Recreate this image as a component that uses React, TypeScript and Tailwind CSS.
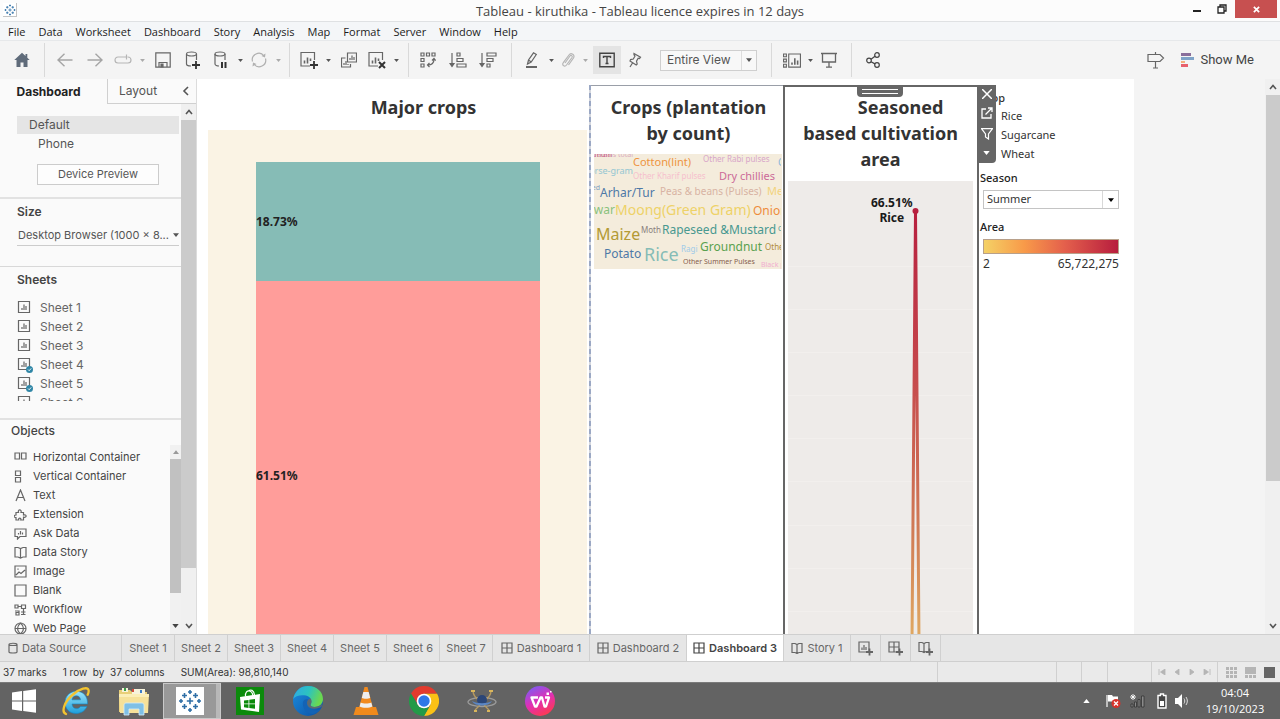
import React from "react";

type Kids = { children?: React.ReactNode };

const ui = "font-['Inter','Liberation_Sans',sans-serif]";
const seg = "font-['Open_Sans','Noto_Sans',sans-serif]";
const viz = "font-['Noto_Sans','Open_Sans',sans-serif]";

function Ico({ className = "w-4 h-4", box = "0 0 16 16", children }: Kids & { className?: string; box?: string }) {
  return (
    <svg className={`shrink-0 ${className}`} viewBox={box} fill="none" stroke="currentColor" strokeWidth="1.2" aria-hidden="true">
      {children}
    </svg>
  );
}

function Caret({ className = "w-[5px] h-[3px]" }: { className?: string }) {
  return (
    <svg className={`shrink-0 ${className}`} viewBox="0 0 8 5" fill="currentColor" aria-hidden="true">
      <path d="M0 0h8L4 5z" />
    </svg>
  );
}

function Tool({ label, className = "w-[30px]", children }: Kids & { label: string; className?: string }) {
  return (
    <button type="button" aria-label={label} title={label} className={`flex h-7 shrink-0 items-center justify-center ${className}`}>
      {children}
    </button>
  );
}

function Drop({ label, dim = false }: { label: string; dim?: boolean }) {
  return (
    <button type="button" aria-label={label} className={`flex h-7 w-3 shrink-0 items-center justify-center ${dim ? "text-[#aaaaaa]" : "text-[#555555]"}`}>
      <Caret />
    </button>
  );
}

function Group({ className = "", children }: Kids & { className?: string }) {
  return <div className={`flex h-[34px] shrink-0 items-center border-r border-[#d9d9d9] ${className}`}>{children}</div>;
}

/* ---------- title and menu ---------- */

const LOGO_MARKS: [number, number, number][] = [
  [12, 12, 3.2], [12, 3, 2], [12, 21, 2], [3, 12, 2], [21, 12, 2], [6.5, 6.5, 2.5], [17.5, 6.5, 2.5], [6.5, 17.5, 2.5], [17.5, 17.5, 2.5],
];

function TableauMark({ className }: { className: string }) {
  return (
    <svg className={className} viewBox="0 0 24 24" stroke="#2f6fa6" strokeWidth="1.6" aria-hidden="true">
      {LOGO_MARKS.map(([x, y, r]) => (
        <path key={`${x}-${y}`} d={`M${x - r} ${y}h${r * 2}M${x} ${y - r}v${r * 2}`} />
      ))}
    </svg>
  );
}

function TitleBar() {
  return (
    <header className="flex h-[22px] shrink-0 items-start border-b border-[#dfe1e3] bg-[#fcfcfc]">
      <div className="flex w-36 items-center pt-[3px] pl-[3px]">
        <span className="flex h-3.5 w-3.5 items-center justify-center border-r border-b border-[#c4c4c4] bg-white">
          <TableauMark className="h-3 w-3" />
        </span>
      </div>
      <h1 className={`grow text-center text-[13px] leading-[23px] text-[#444444] ${seg}`}>Tableau - kiruthika - Tableau licence expires in 12 days</h1>
      <div className="flex w-36 justify-end pr-[3px]">
        <button type="button" aria-label="Minimise" className="flex h-[18px] w-6 items-center justify-center">
          <span className="mt-1 h-0.5 w-2 bg-[#222222]" />
        </button>
        <button type="button" aria-label="Restore" className="flex h-[18px] w-[26px] items-center justify-center text-[#222222]">
          <Ico className="h-2.5 w-2.5" box="0 0 10 10">
            <path d="M1 3h6v6H1zM3 3V1h6v6H7" strokeWidth="1.3" />
          </Ico>
        </button>
        <button type="button" aria-label="Close" className="flex h-[18px] w-[42px] items-center justify-center bg-[#c75050] text-white">
          <Ico className="h-[7px] w-[7px]" box="0 0 8 8">
            <path d="M1 1l6 6M7 1l-6 6" strokeWidth="2" />
          </Ico>
        </button>
      </div>
    </header>
  );
}

const MENUS = ["File", "Data", "Worksheet", "Dashboard", "Story", "Analysis", "Map", "Format", "Server", "Window", "Help"];

function MenuBar() {
  return (
    <nav className={`flex h-[19px] shrink-0 items-center gap-[13px] border-b border-[#e6e8ea] bg-[#f4f6f8] pt-0.5 pl-2 text-[11px] text-[#1c1c1c] ${seg}`}>
      {MENUS.map((m) => (
        <button type="button" key={m}>{m}</button>
      ))}
    </nav>
  );
}

/* ---------- toolbar ---------- */

function Toolbar() {
  return (
    <div className="flex h-[38px] shrink-0 items-center bg-[#f4f4f4] text-[#666666]">
      <Group className="w-[45px] justify-center">
        <Tool label="Home">
          <svg className="h-4 w-4" viewBox="0 0 16 16" fill="#5f6b7a" aria-hidden="true">
            <path d="M8 .8L.3 8h2.2v7h4v-4.6h3V15h4V8h2.2l-2.4-2.2V2h-1.8v2.1z" />
          </svg>
        </Tool>
      </Group>
      <Group className="px-[5px]">
        <Tool label="Undo"><Ico className="h-4 w-4 text-[#a5a5a5]"><path d="M15.5 8H1M7.5 1.8L1 8l6.500 6.200" strokeWidth="1.400" /></Ico></Tool>
        <Tool label="Redo"><Ico className="h-4 w-4 text-[#a5a5a5]"><path d="M.5 8H15M8.500 1.800L15 8l-6.500 6.200" strokeWidth="1.400" /></Ico></Tool>
        <Tool label="Replay" className="w-[26px]">
          <Ico className="h-4 w-[18px] text-[#b5b5b5]" box="0 0 18 16"><path d="M12 5H4a3 3 0 000 6h10a3 3 0 000-6h-.5M12.500 2.500v5" /></Ico>
        </Tool>
        <Drop label="Replay options" dim />
        <Tool label="Save">
          <Ico><path d="M.8.8h14.400v14.400H.800zM4 15v-4.500h8V15" /><path d="M6 12h2v3H6z" fill="currentColor" /></Ico>
        </Tool>
        <Tool label="New data source">
          <Ico className="h-[18px] w-4" box="0 0 16 18"><ellipse cx="6.500" cy="3" rx="5" ry="2" /><path d="M1.500 3v10c0 1 2 2 4.500 2M11.500 3v6" /><path d="M11 10v8M7 14h8" stroke="#333" strokeWidth="1.800" /></Ico>
        </Tool>
        <Tool label="Pause auto updates" className="w-[26px]">
          <Ico className="h-[18px] w-4" box="0 0 16 18"><ellipse cx="7" cy="3" rx="5" ry="2" /><path d="M2 3v10c0 1 2 2 4 2M12 3v6" /><path d="M9 11v6M12.500 11v6" stroke="#333" strokeWidth="2" /></Ico>
        </Tool>
        <Drop label="Pause options" />
        <Tool label="Refresh" className="w-[26px]">
          <Ico className="h-4 w-4 text-[#b0b0b0]"><path d="M1.500 9.500A6.500 6.500 0 0113 4M14.500 6.500A6.500 6.500 0 013 12" /><path d="M14.500 1.500l-.5 4-3.500-1.500zM1.500 14.500l.5-4 3.500 1.500z" fill="currentColor" stroke="none" /></Ico>
        </Tool>
        <Drop label="Refresh options" dim />
      </Group>
      <Group className="px-1.5">
        <Tool label="New worksheet" className="w-[26px]">
          <Ico className="h-[18px] w-[18px]" box="0 0 18 18"><path d="M10 15H1V1.500h13.500V9" /><path d="M4.500 12.500v-3M7.500 12.500v-6M10.500 10V7.500" strokeWidth="1.600" /><path d="M14 10v8M10 14h8" stroke="#333" strokeWidth="1.800" /></Ico>
        </Tool>
        <Drop label="New worksheet options" />
        <Tool label="Duplicate">
          <Ico><path d="M6.500 1h9v9h-9zM4.500 6H.500v9h9v-3" /><path d="M9 8V6M11 8V3.500M13 8V5M3 13v-2M5 13V9M7 13v-1" /></Ico>
        </Tool>
        <Tool label="Clear sheet" className="w-[26px]">
          <Ico className="h-[18px] w-[18px]" box="0 0 18 18"><path d="M10 15H1V1.500h13.500V9" /><path d="M4.500 12.500v-3M7.500 12.500v-6M10.500 10V7.500" strokeWidth="1.600" /><path d="M11 11l6 6M17 11l-6 6" stroke="#333" strokeWidth="2" /></Ico>
        </Tool>
        <Drop label="Clear options" />
      </Group>
      <Group className="pr-2 pl-1">
        <Tool label="Swap rows and columns">
          <Ico><path d="M1 1h3v3H1zM6.500 1h3v3h-3zM12 1h3v3h-3zM1 6.500h3v3H1zM1 12h3v3H1z" /><path d="M14 7c0 4-2 6-6 6M12 8.500L14 6.500l1.700 2M9.500 11L7.500 13l2 2" /></Ico>
        </Tool>
        <Tool label="Sort ascending">
          <Ico className="h-4 w-[18px]" box="0 0 18 16"><path d="M3 1v13" /><path d="M1 11.500h4L3 14.500z" fill="currentColor" /><path d="M8 1h3v3H8zM8 6.500h6v3H8zM8 12h9v3H8z" /></Ico>
        </Tool>
        <Tool label="Sort descending">
          <Ico className="h-4 w-[18px]" box="0 0 18 16"><path d="M3 1v13" /><path d="M1 11.500h4L3 14.500z" fill="currentColor" /><path d="M8 1h9v3H8zM8 6.500h6v3H8zM8 12h3v3H8z" /></Ico>
        </Tool>
      </Group>
      <Group className="pr-3.5 pl-[7px]">
        <Tool label="Highlight" className="w-[26px]">
          <Ico><path d="M3.500 12l1-4L9.500.800l2.800 1.700L7.200 10z M4.500 8l2.700 2" /><path d="M2 15h11" strokeWidth="2" /></Ico>
        </Tool>
        <Drop label="Highlight options" />
        <Tool label="Group members" className="w-[22px]">
          <Ico className="h-4 w-4 text-[#b5b5b5]"><path d="M5 11l5-7c1-1.500 3 0 2 1.500L6.500 13C4.500 15.500 1.500 13 3.300 10.700L9 3c2-2.800 6.500 0 4.500 3L8.500 13" /></Ico>
        </Tool>
        <Drop label="Group options" dim />
        <Tool label="Show mark labels" className="ml-0.5 w-7 bg-[#e4e4e4] text-[#444444]">
          <Ico><path d="M.8 1.300h14.400v13.400H.800z" strokeWidth="1.400" /><path d="M4.500 6V4.500h7V6M8 4.500v7M6.500 11.500h3" strokeWidth="1.400" /></Ico>
        </Tool>
        <Tool label="Fix axes" className="w-7">
          <Ico className="h-4 w-3.5" box="0 0 14 16"><path d="M6 1.500l6.500 3.700-1 1.300-1.300-.3-1.700 3 .7 2.800-1 1L2 9l.6-1.400 2.700-.600 1.700-3L6 2.800zM4.500 11L2 15" /></Ico>
        </Tool>
        <div className={`ml-[11px] flex h-[21px] w-[97px] items-stretch border border-[#cfcfcf] bg-[#f8f8f8] text-[12px] text-[#555555] ${ui}`}>
          <select aria-label="Fit" defaultValue="Entire View" className="w-20 appearance-none bg-transparent pl-1.5 outline-none">
            <option>Entire View</option>
            <option>Standard</option>
          </select>
          <span className="pointer-events-none flex grow items-center justify-center border-l border-[#dddddd]"><Caret className="h-1 w-1.5" /></span>
        </div>
      </Group>
      <Group className="pr-[9px] pl-2">
        <Tool label="Show cards" className="w-6">
          <Ico className="h-[15px] w-5" box="0 0 20 16"><path d="M1 1h3v3H1zM1 6.500h3v3H1zM1 12h3v3H1zM6.500 1H19v14H6.500z" /><path d="M10 12.500V10M13 12.500v-7M16 12.500V8" strokeWidth="1.700" /></Ico>
        </Tool>
        <Drop label="Show cards options" />
        <Tool label="Presentation mode" className="w-[26px]">
          <Ico><path d="M0 1.500h16M1.500 1.500v8.500h13V1.500M8 10v5M5 15.200h6" strokeWidth="1.300" /></Ico>
        </Tool>
      </Group>
      <Tool label="Share" className="ml-2 w-[26px]">
        <Ico className="h-4 w-3.5 text-[#444444]" box="0 0 14 16"><circle cx="3" cy="8.500" r="2.300" /><circle cx="11" cy="3" r="2.300" /><circle cx="11" cy="13" r="2.300" /><path d="M5 7.200L9 4.300M5 9.700l4 2.200" /></Ico>
      </Tool>
      <div className="ml-auto flex items-center pr-[26px]">
        <Tool label="Guide" className="mr-4 w-[18px]">
          <Ico className="h-[18px] w-[18px]" box="0 0 18 18"><path d="M1 3.500h12l3.500 3.500L13 10.500H1zM8.500 1v2.500M8.500 10.500V17M6 17h5" /></Ico>
        </Tool>
        <button type="button" className="flex items-center gap-1.5 font-['Roboto',sans-serif] text-[13px] text-[#444444]">
          <svg className="h-3.5 w-[13px]" viewBox="0 0 13 14" aria-hidden="true">
            <path fill="#8a6f9b" d="M0 0h10v3H0z" /><path fill="#7fa3c8" d="M0 4h13v3H0z" /><path fill="#f3b07c" d="M0 8h4v2H0z" /><path fill="#e8606c" d="M0 11h7v3H0z" />
          </svg>
          Show Me
        </button>
      </div>
    </div>
  );
}

/* ---------- side pane ---------- */

function Chevron({ d, className = "h-2 w-2" }: { d: string; className?: string }) {
  return <Ico className={className} box="0 0 8 8"><path d={d} strokeWidth="1.600" /></Ico>;
}
const UP = "M1 6l3-3.500L7 6";
const DOWN = "M1 2l3 3.500L7 2";

function SheetIcon({ used }: { used: boolean }) {
  return (
    <Ico className="h-4 w-4" box="0 0 16 16">
      <path d="M1.500 1.500h11v11h-11z" /><path d="M5 10V8M7 10V4.500M9 10V6" />
      {used && <><circle cx="12.500" cy="12.500" r="3.500" fill="#2f86a6" stroke="none" /><path d="M11 12.500l1.200 1.200 2-2.300" stroke="#fff" strokeWidth=".9" /></>}
    </Ico>
  );
}

const OBJECTS: [string, React.ReactNode][] = [
  ["Horizontal Container", <path d="M1 2h4.500v6H1zM7.500 2H12v6H7.500z" />],
  ["Vertical Container", <path d="M1.500 1h5v4.500h-5zM1.500 7.500h5V12h-5z" />],
  ["Text", <path d="M2 12L6.500 1 11 12M3.500 8.500h6" />],
  ["Extension", <path d="M2 4.500h2.500C3.500 1 8 1 7 4.500h2.500V7c3.500-1 3.500 3 0 2.200V12H6.800C7.500 9.500 4 9.500 4.700 12H2V9.500C-.5 9.500-.5 7 2 7z" />],
  ["Ask Data", <path d="M1 2h11v7.500H6L3.500 12V9.500H1zM4.500 7.500V6M6.500 7.500V4M8.500 7.500V5.500" />],
  ["Data Story", <path d="M1 1.500h3l2.500 1 2.500-1h3V11H9l-2.500 1L4 11H1zM6.500 2.500V12" />],
  ["Image", <path d="M1 1h11v11H1zM2 10l3-3 2 1.500L11 5M4 3.500v1.200" />],
  ["Blank", <path d="M1 1h11v11H1z" />],
  ["Workflow", <path d="M1 2h3v3H1zM4 3.500h3.500M7.500 2h4v3.500h-4zM1 8h4v1.500M2 9.500h3V12H2zM7 9h4.500M7 11.500h4.500M9.500 5.500v6.500" />],
  ["Web Page", <><circle cx="6.500" cy="6.500" r="5.500" /><path d="M1 6.500h11M6.500 1c-4 3.500-4 7.500 0 11M6.500 1c4 3.500 4 7.500 0 11" /></>],
];

function SidePane() {
  return (
    <aside className={`flex w-[197px] shrink-0 flex-col border-r border-[#dcdcdc] bg-[#fafafa] text-[12px] text-[#555555] ${ui}`}>
      <div className="flex h-[25px] shrink-0">
        <button type="button" className="w-[107px] pr-2.5 text-center text-[12px] font-bold text-[#222222]">Dashboard</button>
        <button type="button" className="flex grow items-center justify-between border-b border-l border-[#d0d0d0] pr-1.5 pl-[11px] text-[12px]">
          Layout
          <Chevron d="M6 0L2 4l4 4" className="h-2.5 w-2" />
        </button>
      </div>
      <div className="flex min-h-0 grow">
        <div className="flex min-w-0 grow flex-col">
          <section className="h-[95px] shrink-0 border-b-2 border-[#e2e2e2] pt-3 pl-[17px]">
            <div className="mr-0.5 bg-[#e5e5e5] pl-3 leading-[18px]">Default</div>
            <div className="pl-[21px] leading-[19px]">Phone</div>
            <button type="button" className="mt-[11px] ml-5 block h-[21px] w-[122px] border border-[#cccccc] bg-[#fdfdfd] text-[11px] leading-[19px]">Device Preview</button>
          </section>
          <section className="h-[68px] shrink-0 border-b border-[#d8d8d8] pt-[3px] pl-[17px]">
            <h2 className="text-[12px] leading-5 font-semibold text-[#444444]">Size</h2>
            <button type="button" className="mt-[3px] flex h-[21px] w-[162px] items-center justify-between border-b border-[#cccccc] pl-px text-[11px]">
              Desktop Browser (1000 x 8...
              <Caret className="h-1 w-1.5" />
            </button>
          </section>
          <section className="h-[153px] shrink-0 border-b-2 border-[#e2e2e2] pt-[3px] pl-[17px]">
            <h2 className="text-[12px] leading-5 font-semibold text-[#444444]">Sheets</h2>
            <ul className="mt-2 h-[103px] overflow-hidden">
              {[1, 2, 3, 4, 5, 6].map((n) => (
                <li key={n} className="flex h-[19px] items-center gap-[7px] text-[#666666]">
                  <SheetIcon used={n === 4 || n === 5} />
                  <span>Sheet {n}</span>
                </li>
              ))}
            </ul>
          </section>
          <section className="flex min-h-0 grow flex-col overflow-hidden">
            <h2 className="shrink-0 pb-1 pl-[11px] text-[12px] leading-[21px] font-medium text-[#444444]">Objects</h2>
            <div className="flex min-h-0 grow">
              <ul className="min-h-0 grow overflow-hidden pt-[3px] pl-[14px] text-[11px] text-[#444444]">
                {OBJECTS.map(([name, icon]) => (
                  <li key={name} className="flex h-[19px] items-center gap-1.5">
                    <Ico className="h-[13px] w-[13px] text-[#666666]" box="0 0 13 13">{icon}</Ico>
                    <span className="whitespace-nowrap">{name}</span>
                  </li>
                ))}
              </ul>
              <div className="flex w-[11px] shrink-0 flex-col items-center bg-[#f1f1f1] text-[#999999]">
                <span className="flex h-3.5 rotate-180 items-center"><Caret className="h-1 w-1.5" /></span>
                <div className="h-[134px] w-full bg-[#c1c1c1]" />
                <span className="mt-auto flex h-4 items-center text-[#444444]"><Caret className="h-1 w-[7px]" /></span>
              </div>
            </div>
          </section>
        </div>
        <div className="flex w-[15px] shrink-0 flex-col items-center bg-[#f0f0f0] text-[#555555]">
          <span className="flex h-4 items-center"><Chevron d={UP} /></span>
          <div className="h-[448px] w-full bg-[#cbcbcb]" />
          <span className="mt-auto flex h-4 items-center"><Chevron d={DOWN} /></span>
        </div>
      </div>
    </aside>
  );
}

/* ---------- dashboard ---------- */

const heading = "text-center text-[18px] leading-[26px] font-bold text-[#333333]";

function MajorCrops() {
  return (
    <section className="flex min-w-0 grow flex-col pt-[15px] pr-0.5 pl-[11px]">
      <h2 className={`pl-[52px] ${heading}`}>Major crops</h2>
      <div className="mt-[10px] flex min-h-0 grow flex-col bg-[#faf3e4] pt-8 pr-[47px] pl-12 text-[12px] font-bold text-[#222222]">
        <div className="flex h-[119px] shrink-0 items-center bg-[#86bcb6]">18.73%</div>
        <div className="min-h-0 grow bg-[#ff9d9a] pt-[187px] leading-4">61.51%</div>
      </div>
    </section>
  );
}

type Word = [text: string, x: number, y: number, size: number, color: string, anchor?: "end"];
const WORDS: Word[] = [
  ["Cereals total", 39, 3, 7, "#d9a9bd", "end"],
  ["Sesamum", 18, 3, 7, "#c4517c", "end"],
  ["Cotton(lint)", 39, 12, 11, "#ee9440"],
  ["Other Rabi pulses", 109, 8, 8, "#d8a6c9"],
  ["Coconut", 184, 12, 10, "#8cb6da"],
  ["Horse-gram", 39, 20, 9, "#93c6d2", "end"],
  ["Other Kharif pulses", 39, 25, 8, "#f6bfcd"],
  ["Dry chillies", 125, 26, 11, "#cc6a98"],
  ["Linseed", 6, 36, 7, "#7f9fc4", "end"],
  ["Arhar/Tur", 6, 43, 12, "#4e79a7"],
  ["Peas & beans (Pulses)", 66, 41, 10, "#d8b3a3"],
  ["Mesta", 173, 41, 11, "#f2d37c"],
  ["Jowar", 21, 60, 12, "#8ac27c", "end"],
  ["Moong(Green Gram)", 21, 61, 14, "#eed268"],
  ["Onion", 159, 61, 12, "#ee8c3c"],
  ["Maize", 2, 86, 16, "#b39a35"],
  ["Moth", 47, 79, 8, "#8a7f7c"],
  ["Rapeseed &Mustard", 68, 80, 12, "#489890"],
  ["Castor", 184, 77, 7, "#499894"],
  ["Potato", 10, 104, 12, "#4e79a7"],
  ["Rice", 50, 107, 18, "#86bcb6"],
  ["Ragi", 87, 98, 8, "#a0cbe8"],
  ["Groundnut", 106, 97, 12, "#59a14f"],
  ["Other Cereals", 171, 96, 8, "#b08b3c"],
  ["Other Summer Pulses", 89, 110, 7, "#86604c"],
  ["Black pepper", 167, 113, 7, "#f1aed0"],
];

function CropCloud() {
  return (
    <section className="flex w-[194px] shrink-0 pt-[6px]">
      <div className="w-0.5 shrink-0 bg-[repeating-linear-gradient(to_bottom,#9ba8c4_0,#9ba8c4_5px,#d3d6dd_5px,#d3d6dd_8px)]" />
      <div className="min-w-0 grow border-t border-[#9a9fa8] pt-2 pl-[3px]">
        <h2 className={heading}>Crops (plantation<br />by count)</h2>
        <div className="mt-2 mr-px h-[115px] overflow-hidden bg-[#f4ecdc]">
          <svg className="h-[115px] w-[187px]" viewBox="0 0 187 115" role="img" aria-label="Crops by plantation count">
            {WORDS.map(([t, x, y, s, c, a]) => (
              <text key={t} x={x} y={y} fontSize={s} fill={c} textAnchor={a ?? "start"}>{t}</text>
            ))}
          </svg>
        </div>
      </div>
    </section>
  );
}

function SeasonArea() {
  return (
    <section className="relative flex w-[196px] shrink-0 flex-col pt-[6px]">
      <div className="flex grow flex-col border-t-2 border-r-2 border-l-2 border-[#666666] pt-[7px] pr-1 pl-[3px]">
        <h2 className={heading}><span className="pl-10">Seasoned</span><br />based cultivation area</h2>
        <div className="relative mt-[9px] min-h-0 grow overflow-hidden bg-[#eeebe9]">
          <svg className="absolute top-0 left-0 h-[460px] w-[186px]" viewBox="0 0 186 460" role="img" aria-label="Share of cultivated area">
            <defs>
              <linearGradient id="season" gradientUnits="userSpaceOnUse" x1="0" y1="30" x2="0" y2="453">
                <stop offset="0" stopColor="#b7203f" />
                <stop offset=".4" stopColor="#c64a4d" />
                <stop offset=".75" stopColor="#d07a55" />
                <stop offset="1" stopColor="#dfa762" />
              </linearGradient>
            </defs>
            <path d="M0 85.500h186M0 128.500h186M0 171.500h186M0 214.500h186M0 257.500h186M0 300.500h186M0 344.500h186M0 387.500h186M0 430.500h186" stroke="#f2efed" />
            <path d="M124 460L127.500 30L131 460" fill="none" stroke="url(#season)" strokeWidth="3" />
            <circle cx="127.500" cy="30" r="3" fill="#b7203f" />
          </svg>
          <p className="absolute top-[14px] left-[83px] text-center text-[12px] leading-[15px] font-bold text-[#1a1a1a]">66.51%<br />Rice</p>
        </div>
      </div>
      <div className="absolute top-[6px] left-[74px] flex h-3 w-[46px] flex-col items-center justify-center gap-[3px] rounded-b-sm bg-[#666666]">
        <span className="h-px w-9 bg-white" /><span className="h-px w-9 bg-white" />
      </div>
      <div className="absolute top-[6px] left-[194px] z-10 flex h-[78px] w-[19px] flex-col items-center rounded-br-sm bg-[#666666] text-white">
        <button type="button" aria-label="Remove" className="flex h-[18px] items-center"><Ico className="h-2.5 w-2.5" box="0 0 10 10"><path d="M0 0l10 10M10 0L0 10" strokeWidth="1.500" /></Ico></button>
        <button type="button" aria-label="Go to sheet" className="flex h-5 items-center"><Ico className="h-3 w-3" box="0 0 12 12"><path d="M5 2H1v9h9V7M4.500 7.500L11 1M7 1h4v4" strokeWidth="1.300" /></Ico></button>
        <button type="button" aria-label="Use as filter" className="flex h-[21px] items-center"><Ico className="h-3 w-3" box="0 0 12 12"><path d="M.5.7h11L7.500 6v5L4.500 9V6z" strokeWidth="1.200" /></Ico></button>
        <button type="button" aria-label="More options" className="flex h-[18px] items-center"><Caret className="h-1 w-[7px]" /></button>
      </div>
    </section>
  );
}

function Legends() {
  return (
    <section className="w-[155px] shrink-0 pt-[11px] pr-[15px] text-[11px] text-[#333333]">
      <h3 className="pl-px leading-4 font-medium">Crop</h3>
      <ul className="pl-[22px] leading-[19px]">
        <li>Rice</li>
        <li>Sugarcane</li>
        <li>Wheat</li>
      </ul>
      <label htmlFor="season-filter" className="mt-[7px] block pl-px leading-4 font-medium text-[#222222]">Season</label>
      <div className="mt-1 ml-1 flex h-[19px] border border-[#c4c4c4] bg-white">
        <select id="season-filter" defaultValue="Summer" className="min-w-0 grow appearance-none bg-transparent pl-[3px] outline-none">
          <option>Summer</option>
          <option>Winter</option>
        </select>
        <span className="pointer-events-none flex w-4 items-center justify-center border-l border-[#d8d8d8] text-black"><Caret className="h-1 w-1.5" /></span>
      </div>
      <h3 className="mt-[10px] pl-px leading-4 font-medium text-[#222222]">Area</h3>
      <div className="mt-1 ml-1 h-[15px] border border-[#b8a08a] bg-[linear-gradient(to_right,#f4d166,#f89a49_30%,#e4604c_60%,#b71d3e)]" />
      <div className="ml-1 flex justify-between pt-0.5 text-[12px] leading-4"><span>2</span><span>65,722,275</span></div>
    </section>
  );
}

function Canvas() {
  return (
    <main className={`flex min-w-0 grow overflow-hidden bg-white ${viz}`}>
      <MajorCrops />
      <CropCloud />
      <SeasonArea />
      <Legends />
      <div className="w-[131px] shrink-0 bg-[#f4f4f4]" />
      <div className="flex w-[15px] shrink-0 flex-col items-center bg-[#f0f0f0] text-[#555555]">
        <span className="flex h-4 items-center"><Chevron d={UP} /></span>
        <div className="h-[386px] w-3.5 bg-[#cbcbcb]" />
        <span className="mt-auto flex h-4 items-center"><Chevron d={DOWN} /></span>
      </div>
    </main>
  );
}

/* ---------- sheet tabs and status ---------- */

const gridIcon = <path d="M1 1h10v10H1zM6 1v10M1 6h10" />;
const bookIcon = <path d="M1 1.500h3l2 1 2-1h3v9H8l-2 1-2-1H1zM6 2.500v9" />;
const DASHBOARDS = [1, 2, 3];
const NEW_TABS: [string, React.ReactNode][] = [
  ["New worksheet", <path d="M1 1h10v10H1zM4 9V6.500M6 9V4M8 9V6" />],
  ["New dashboard", gridIcon],
  ["New story", bookIcon],
];

function SheetTabs() {
  const cell = "flex h-full shrink-0 items-center justify-center border-r border-[#d0d0d0]";
  return (
    <nav className={`flex h-7 shrink-0 items-center border-t border-b border-[#cfcfcf] bg-[#e6e6e6] text-[11px] whitespace-nowrap text-[#666666] ${ui}`}>
      <button type="button" className="flex h-full w-[122px] shrink-0 items-center gap-1 border-r border-[#d0d0d0] pl-2">
        <Ico className="h-3 w-2.5" box="0 0 10 12"><path d="M1 2.500v7.500c0 1.300 8 1.300 8 0V2.500c0-1.700-8-1.700-8 0 0 1.300 8 1.300 8 0" /></Ico>
        Data Source
      </button>
      {[1, 2, 3, 4, 5, 6, 7].map((n) => (
        <button type="button" key={n} className={`w-[53px] ${cell}`}>Sheet {n}</button>
      ))}
      {DASHBOARDS.map((n) => (
        <button type="button" key={n} className={`w-[97px] gap-1 ${cell} ${n === 3 ? "bg-white font-semibold text-[#444444]" : ""}`}>
          <Ico className="h-3 w-3" box="0 0 12 12">{gridIcon}</Ico>Dashboard {n}
        </button>
      ))}
      <button type="button" className={`w-[67px] gap-1 ${cell}`}><Ico className="h-3 w-3" box="0 0 12 12">{bookIcon}</Ico>Story 1</button>
      {NEW_TABS.map(([label, icon]) => (
        <button type="button" key={label} aria-label={label} className={`w-[30px] ${cell}`}>
          <Ico className="h-[15px] w-[15px]" box="0 0 15 15">{icon}<path d="M11.500 7.500v7M8 11h7" strokeWidth="1.800" /></Ico>
        </button>
      ))}
    </nav>
  );
}

function StatusBar() {
  return (
    <div className={`flex h-5 shrink-0 items-center bg-[#eaeaea] text-[10px] whitespace-pre text-[#333333] ${ui}`}>
      <span className="pl-[3px]">37 marks</span>
      <span className="pl-4">1 row  by  37 columns</span>
      <span className="pl-4">SUM(Area): 98,810,140</span>
      <div className="ml-auto flex h-full items-center text-[#b5b5b5]">
        <span className="h-full w-[119px] border-l border-[#d0d0d0]" />
        <span className="h-full w-[25px] border-l border-[#d0d0d0]" />
        <span className="h-full w-[26px] border-l border-[#d0d0d0]" />
        <span className="h-full w-11 border-l border-[#d0d0d0]" />
        <div className="flex h-full w-[66px] items-center justify-around border-l border-[#d0d0d0] px-0.5">
          {[
            ["First", "M1 0v6M7 0v6L2.500 3z"],
            ["Previous", "M6 0v6L2 3z"],
            ["Next", "M2 0v6l4-3z"],
            ["Last", "M7 0v6M1 0v6l4.500-3z"],
          ].map(([label, d]) => (
            <button type="button" aria-label={label} key={label}><svg className="h-1.5 w-2" viewBox="0 0 8 6" fill="currentColor" stroke="currentColor" strokeWidth=".8"><path d={d} /></svg></button>
          ))}
        </div>
        <div className="flex h-full w-[63px] items-center justify-between border-l border-[#d0d0d0] pr-[5px] pl-2">
          <svg className="h-[11px] w-[11px] shrink-0" viewBox="0 0 11 11" fill="currentColor"><path d="M0 0h3v3H0zM4 0h3v3H4zM8 0h3v3H8zM0 4h3v3H0zM4 4h3v3H4zM8 4h3v3H8zM0 8h3v3H0zM4 8h3v3H4zM8 8h3v3H8z" /></svg>
          <svg className="h-[11px] w-[11px] shrink-0" viewBox="0 0 11 11" fill="currentColor"><path d="M0 0h11v7H0zM0 8h3v3H0zM4 8h3v3H4zM8 8h3v3H8z" /></svg>
          <span className="h-[11px] w-[11px] bg-[#666666]" />
        </div>
      </div>
    </div>
  );
}

/* ---------- taskbar ---------- */

function TaskIcon({ label, active = false, children }: Kids & { label: string; active?: boolean }) {
  return (
    <button type="button" aria-label={label} className="flex h-full w-[58px] shrink-0 items-center justify-center">
      {active ? <span className="flex h-full w-full items-center justify-center border border-[#c9c9c9] bg-[#999999] pr-1 shadow-[inset_-4px_0_0_#b8b8b8]">{children}</span> : children}
    </button>
  );
}

function Taskbar() {
  const art = "h-[30px] w-[30px]";
  return (
    <footer className="flex h-[37px] shrink-0 items-center border-t border-[#7a7a7a] bg-[#636363] text-white">
      <button type="button" aria-label="Start" className="flex w-[47px] shrink-0 items-center justify-center">
        <svg className="h-6 w-[26px]" viewBox="0 0 26 24" fill="#fff"><path d="M1 3.500l10-1.400v9.300H1zM12.200 2L25 .2v11.200H12.200zM1 12.600h10v9.300L1 20.500zM12.200 12.600H25v11.200L12.200 22z" /></svg>
      </button>
      <TaskIcon label="Internet Explorer">
        <svg className={art} viewBox="0 0 30 30" fill="none">
          <defs><linearGradient id="ie" x2="0" y2="1"><stop stopColor="#9be4fa" /><stop offset="1" stopColor="#1e9fdc" /></linearGradient></defs>
          <path d="M26 20.500C23.500 25.500 19.500 27.500 15 27.500 8.500 27.500 4 22.700 4 16.500S8.800 5.300 15.500 5.300 27 10.500 26.500 18H11c.4 3 2 4.600 4.600 4.600 1.800 0 3-.7 3.800-2.100zM11 13.800h8.500c-.3-2.600-1.800-4-4.200-4s-4 1.500-4.300 4z" fill="url(#ie)" stroke="#1686c3" strokeWidth=".6" />
          <path d="M5 28C0 26 3 16 12 8.500 19 2.500 26.500.500 27.500 4c.4 1.300 0 3-.8 4.800" stroke="#f4c430" strokeWidth="2.300" strokeLinecap="round" />
        </svg>
      </TaskIcon>
      <TaskIcon label="File Explorer">
        <svg className={art} viewBox="0 0 30 30">
          <path d="M0 4h11l2 2h15v20H0z" fill="#e9cf78" /><path d="M3 2h6v4H3zM13 3h13v5H13z" fill="#f7f3dc" /><path d="M5 2h2v3H5z" fill="#3aa14a" /><path d="M13 3h2v3h-2z" fill="#d34a3a" /><path d="M21 4h2v3h-2z" fill="#3e7fc9" />
          <path d="M0 8h30l-1 19H1z" fill="#f6e199" /><path d="M0 8h30v3H0z" fill="#fbeeb8" />
          <path d="M5 29V19c0-1 1-2 2-2h16c1 0 2 1 2 2v10h-5v-6H10v6z" fill="#7fc0e6" stroke="#d7eefa" strokeWidth=".8" />
        </svg>
      </TaskIcon>
      <TaskIcon label="Tableau" active>
        <span className="flex h-7 w-7 items-center justify-center bg-white"><TableauMark className="h-6 w-6" /></span>
      </TaskIcon>
      <TaskIcon label="Store">
        <svg className="h-7 w-7" viewBox="0 0 28 28"><path d="M0 0h28v28H0z" fill="#0b8a0b" /><path d="M4 10l20-3-1 18-18-2.500z" fill="#fff" /><path d="M9.500 9.500C9 5 11.500 3.500 13.500 4s3 2 3.300 4.500M12.500 4c2-2 5.500-1 6 4" fill="none" stroke="#fff" strokeWidth="1.200" /><path d="M8 13.500l4.500-.6v3.600H8zM13.300 12.800l5.700-.8v4.500h-5.700zM8 17.300h4.500v3.600L8 20.300zM13.300 17.300H19v4.500l-5.700-.8z" fill="#0b8a0b" /></svg>
      </TaskIcon>
      <TaskIcon label="Edge">
        <svg className={art} viewBox="0 0 30 30">
          <defs>
            <linearGradient id="eg" x2="1" y2=".3"><stop stopColor="#2fa8e6" /><stop offset=".55" stopColor="#2cc3c0" /><stop offset="1" stopColor="#6bd84f" /></linearGradient>
            <linearGradient id="eb" x2="1" y2="1"><stop stopColor="#1b8fe0" /><stop offset="1" stopColor="#0c4fa3" /></linearGradient>
          </defs>
          <circle cx="15" cy="15" r="15" fill="url(#eb)" />
          <path d="M.2 13C2 4.500 8 0 15 0c9 0 15 6 15 13 0 5-4 8-8.500 8-3 0-4.500-1.200-4-2.500C19 17 19 11 13 9.500 7 8.500 2 10 .2 13z" fill="url(#eg)" />
          <path d="M10 16c-1 6 3 11 9 12.200 4-.5 7-2.500 9-5.400-4 2.500-11 2-13.500-2.500-1.400-2.600-.5-5.500 1-6.800-3-.8-5 .5-5.500 2.500z" fill="#1463b5" />
          <path d="M17.500 18.500c1.300-1.500 1.500-4 .2-6-2.500.3-4 2.500-3.700 5 .4 3 3 5 6.500 5.200 3 .2 6-.7 8-2.200l-.8 2.300 1.800-5.300C28 20 24.500 21 21.500 21c-3 0-4.500-1.200-4-2.500z" fill="#5f6a70" />
        </svg>
      </TaskIcon>
      <TaskIcon label="VLC">
        <svg className={art} viewBox="0 0 30 30">
          <path d="M5 21h20l2.500 8h-25z" fill="#f08a1c" /><path d="M13.500 1h3L22 22c-1 3.500-13 3.500-14 0z" fill="#f28a1e" /><path d="M12.300 6h5.400l1.500 6c-2 1-6.500 1-8.400 0zM9.700 16.500c2.500 1.300 8 1.300 10.600 0l1.100 4c-3 1.700-10 1.700-12.800 0z" fill="#eeeeee" />
        </svg>
      </TaskIcon>
      <TaskIcon label="Chrome">
        <svg className={art} viewBox="0 0 30 30">
          <path d="M15 7.500h13A15 15 0 0115 30l6.500-11.200z" fill="#fbc116" /><path d="M2 7.500A15 15 0 0128 7.500H15L9 18z" fill="#e33b2e" /><path d="M2 7.500l6.500 11.300c2 3 7 4.500 11.500 2.500L15 30A15 15 0 012 7.500z" fill="#229a48" />
          <circle cx="15" cy="15" r="7.300" fill="#fff" /><circle cx="15" cy="15" r="5.700" fill="#2f77e8" />
        </svg>
      </TaskIcon>
      <TaskIcon label="Media tool">
        <svg className={art} viewBox="0 0 30 30" fill="none">
          <ellipse cx="15" cy="16" rx="14" ry="4.500" stroke="#9b9b9b" strokeWidth="1.300" />
          <path d="M6 5c0 4 4 8 7 10M24 5c0 4-4 8-7 10M8 24l5-5M22 24l-5-5" stroke="#b79a60" strokeWidth="1.400" />
          <path d="M4 5h4M22 5h4M7 25h3M20 25h3" stroke="#d9b65c" strokeWidth="2" />
          <circle cx="15" cy="14" r="5" fill="#2b4678" /><path d="M5 15c3 6 17 6 20 0-5 3-15 3-20 0z" fill="#5b86c4" />
        </svg>
      </TaskIcon>
      <TaskIcon label="WPS Office">
        <svg className={art} viewBox="0 0 30 30" fill="none">
          <defs><linearGradient id="wps" x1=".2" x2=".7" y2="1"><stop stopColor="#7a5cf5" /><stop offset=".5" stopColor="#e02fb5" /><stop offset="1" stopColor="#ff3a4c" /></linearGradient></defs>
          <circle cx="15" cy="15" r="15" fill="url(#wps)" />
          <path d="M13 11.500H6.500l3.500 9h1.500l4-9h1.500l2.500 9h1.500L24 11.500h-4" stroke="#fff" strokeWidth="2.300" strokeLinejoin="round" />
          <path d="M21.500 6.500h2.500v2.500h-2.500zM25 5h1.500v1.500H25z" fill="#fff" />
        </svg>
      </TaskIcon>
      <div className="ml-auto flex items-center">
        <button type="button" aria-label="Show hidden icons" className="mr-[15px] flex rotate-180"><Caret className="h-1 w-[7px]" /></button>
        <svg className="mr-2 h-4 w-4" viewBox="0 0 16 16" role="img" aria-label="Action Centre"><path d="M2 2v12" stroke="#ddd" strokeWidth="1.500" /><path d="M3 2h4l1 1.500h5V10H8L7 8.500H3z" fill="#fff" /><circle cx="11" cy="10.500" r="4.500" fill="#d8322b" /><path d="M9 8.500l4 4M13 8.500l-4 4" stroke="#fff" strokeWidth="1.300" /></svg>
        <svg className="mr-3 h-4 w-4" viewBox="0 0 16 16" role="img" aria-label="Network"><path d="M2 14h2v-3H2zM5.500 14h2V9h-2zM9 14h2V6.500H9zM12.500 14h2.500V3h-2.500z" fill="#8a8a8a" stroke="#333" strokeWidth=".8" /><path d="M4 1v6M1 4h6M2 2l4 4M6 2L2 6" stroke="#fff" strokeWidth=".9" /></svg>
        <svg className="mr-[7px] h-4 w-2.5" viewBox="0 0 10 16" role="img" aria-label="Battery"><path d="M3.500 1h3v1.500H9V15H1V2.500h2.500z" fill="#444" stroke="#fff" strokeWidth="1.400" /><path d="M3 8h4v5H3z" fill="#fff" /></svg>
        <svg className="h-4 w-4" viewBox="0 0 16 16" role="img" aria-label="Volume"><path d="M1 5h3l4-4v14l-4-4H1z" fill="#fff" /><path d="M10 5.500c1 1.500 1 3.500 0 5M12 4c1.800 2.500 1.800 5.500 0 8" fill="none" stroke="#ddd" /></svg>
        <div className={`w-[90px] text-center text-[11px] leading-4 ${seg}`}>04:04<br />19/10/2023</div>
      </div>
    </footer>
  );
}

export default function App() {
  return (
    <div className="flex h-screen min-w-0 flex-col overflow-hidden bg-white">
      <TitleBar />
      <MenuBar />
      <Toolbar />
      <div className="flex min-h-0 grow">
        <SidePane />
        <Canvas />
      </div>
      <SheetTabs />
      <StatusBar />
      <Taskbar />
    </div>
  );
}
